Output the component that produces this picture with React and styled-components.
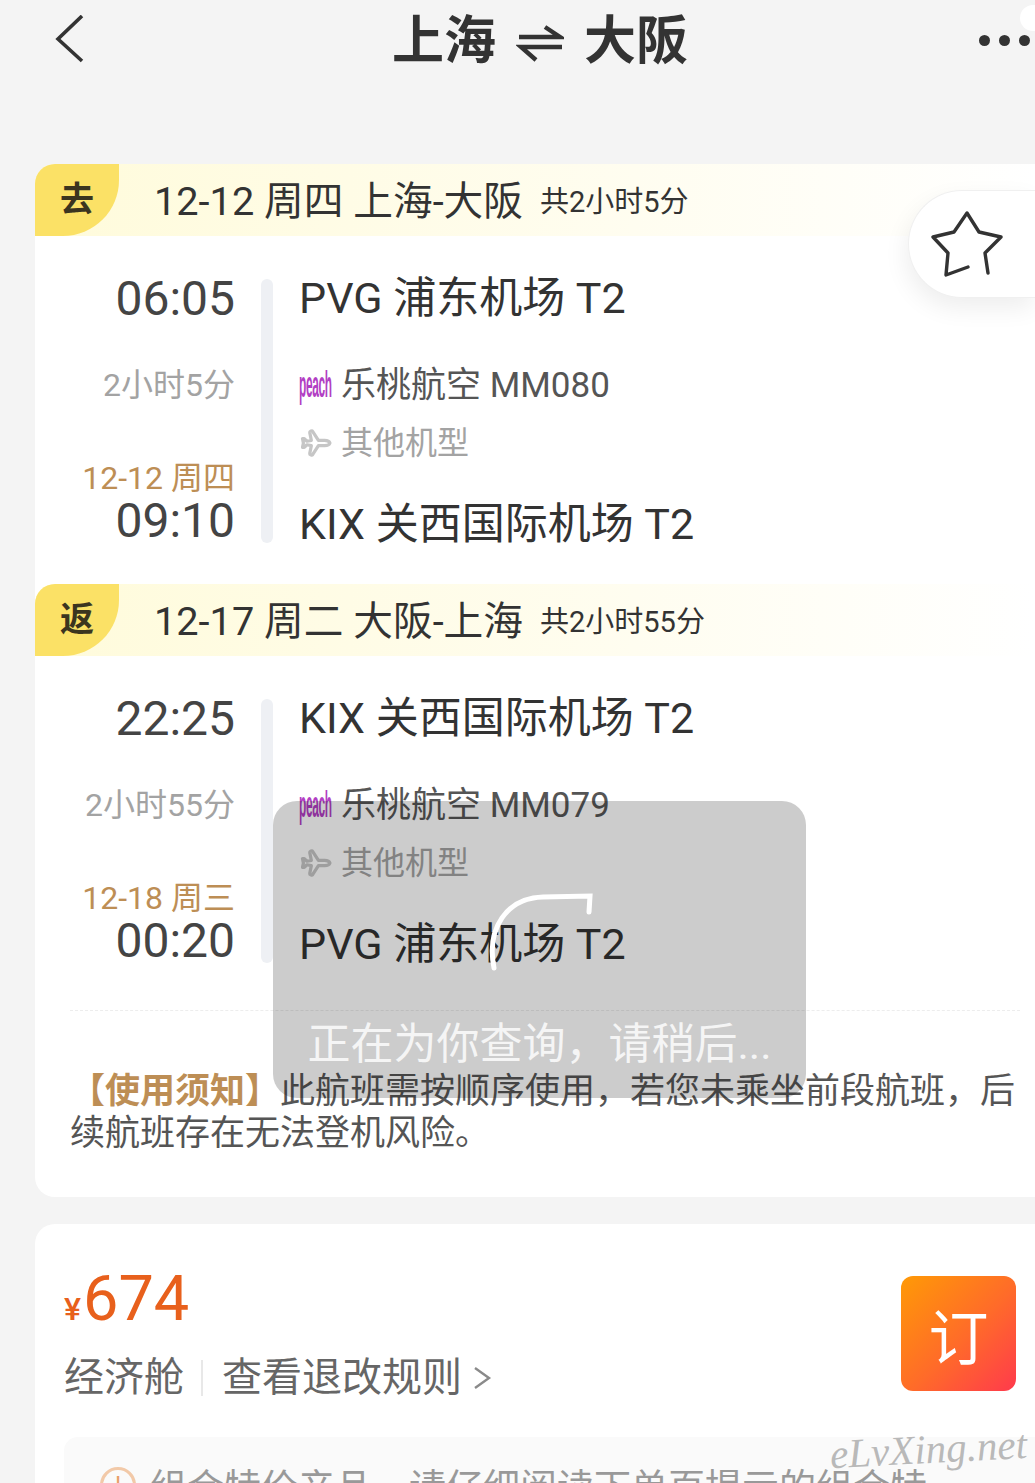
import React from "react"
import styled, { createGlobalStyle } from "styled-components"
import { Plane } from "lucide-react"

const legs = [
  {
    tag: "去",
    title: "12-12 周四 上海-大阪",
    total: "共2小时5分",
    depart: "06:05",
    from: "PVG 浦东机场 T2",
    duration: "2小时5分",
    flight: "乐桃航空 MM080",
    arriveDate: "12-12 周四",
    arrive: "09:10",
    to: "KIX 关西国际机场 T2",
  },
  {
    tag: "返",
    title: "12-17 周二 大阪-上海",
    total: "共2小时55分",
    depart: "22:25",
    from: "KIX 关西国际机场 T2",
    duration: "2小时55分",
    flight: "乐桃航空 MM079",
    arriveDate: "12-18 周三",
    arrive: "00:20",
    to: "PVG 浦东机场 T2",
  },
]

const App = () => {
  return (
    <>
      <GlobalStyle />
      <Page>
        <Nav>
          <BackIcon width="30" height="50" viewBox="0 0 30 50">
            <path d="M27 1 L3 24 L27 46" />
          </BackIcon>
          <Title>
            上海
            <svg width="48" height="40" viewBox="0 0 48 40" fill="none" stroke="#333" strokeWidth="4.4">
              <path d="M3 15 H44 L29 5" />
              <path d="M46 25 H5 L20 38" />
            </svg>
            大阪
          </Title>
          <Dots>
            <i />
            <i />
            <i />
          </Dots>
          <CornerBlob />
        </Nav>

        <FlightCard>
          {legs.map((leg) => (
            <section key={leg.tag}>
              <LegHeader>
                <LegTag>{leg.tag}</LegTag>
                <LegTitle>{leg.title}</LegTitle>
                <LegTotal>{leg.total}</LegTotal>
              </LegHeader>
              <LegBody>
                <TimeColumn>
                  <Time>{leg.depart}</Time>
                  <Duration>{leg.duration}</Duration>
                  <ArriveDate>{leg.arriveDate}</ArriveDate>
                  <Time $tight>{leg.arrive}</Time>
                </TimeColumn>
                <Bar />
                <InfoColumn>
                  <Airport>{leg.from}</Airport>
                  <Airline>
                    <PeachLogo>
                      <span>peach</span>
                    </PeachLogo>
                    {leg.flight}
                  </Airline>
                  <PlaneType>
                    <PlaneIcon size={30} strokeWidth={2.6} />
                    其他机型
                  </PlaneType>
                  <Airport $last>{leg.to}</Airport>
                </InfoColumn>
              </LegBody>
            </section>
          ))}
          <Notice>
            <strong>【使用须知】</strong>此航班需按顺序使用，若您未乘坐前段航班，后续航班存在无法登机风险。
          </Notice>
          <Favorite>
            <svg width="74" height="68" viewBox="0 0 74 68" fill="none" stroke="#333" strokeWidth="3.4" strokeLinejoin="round" strokeLinecap="round">
              <path d="M38 57 L16 65 L18 43 L3 27 L24 22 L37 3 L49 22 L71 27 L55 43 L58 63" />
            </svg>
          </Favorite>
        </FlightCard>

        <PriceCard>
          <PriceRow>
            <div>
              <Price>
                <small>¥</small>674
              </Price>
              <Fare>
                <span>经济舱</span>
                <FareLink>
                  查看退改规则
                  <svg width="20" height="30" viewBox="0 0 20 30" fill="none" stroke="#8a8a8a" strokeWidth="2.4">
                    <path d="M3 5 L17 15 L3 25" />
                  </svg>
                </FareLink>
              </Fare>
            </div>
            <BookButton>订</BookButton>
          </PriceRow>
          <TipBox>
            <TipIcon>!</TipIcon>
            组合特价产品，请仔细阅读下单页提示的组合特
          </TipBox>
        </PriceCard>

        <Loading>
          <svg width="112" height="84" viewBox="0 0 112 84" fill="none" stroke="#fff" strokeWidth="5" strokeLinecap="round">
            <path d="M7 78 C-1 38 20 8 56 7 L103 6 L102 22" />
          </svg>
          <LoadingText>正在为你查询，请稍后...</LoadingText>
        </Loading>

        <Watermark>eLvXing.net</Watermark>
      </Page>
    </>
  )
}

const GlobalStyle = createGlobalStyle`
  html, body {
    margin: 0;
    padding: 0;
    background: #f4f4f4;
  }

  * {
    box-sizing: border-box;
  }
`

const Page = styled.div`
  position: relative;
  width: 1035px;
  height: 1483px;
  overflow: hidden;
  background: #f4f4f4;
  color: #333;
  font-family: Roboto, "Noto Sans CJK SC", sans-serif;
`

const Nav = styled.header`
  position: relative;
  display: flex;
  align-items: center;
  justify-content: space-between;
  height: 80px;
  margin-bottom: 84px;
  padding: 0 5px 0 55px;
`

const BackIcon = styled.svg`
  fill: none;
  stroke: #333;
  stroke-width: 3.6;
`

const Title = styled.h1`
  display: flex;
  align-items: center;
  gap: 20px;
  margin: 4px 0 0 16px;
  font-size: 52px;
  font-weight: 700;
  line-height: 80px;
  color: #333;
`

const Dots = styled.div`
  display: flex;
  gap: 9px;

  i {
    width: 11px;
    height: 11px;
    border-radius: 50%;
    background: #333;
  }
`

const CornerBlob = styled.span`
  position: absolute;
  top: 5px;
  right: 0;
  width: 15px;
  height: 26px;
  background: #fff;
  border-radius: 13px 0 0 13px;
`

const FlightCard = styled.main`
  position: relative;
  height: 1033px;
  margin-left: 35px;
  background: #fff;
  border-radius: 20px 0 0 20px;
`

const LegHeader = styled.div`
  display: flex;
  align-items: center;
  height: 72px;
  background: linear-gradient(90deg, #fffbdb 0%, #fffdf0 60%, #fff 100%);
  border-radius: 20px 0 0 0;
`

const LegTag = styled.span`
  flex: none;
  width: 84px;
  height: 72px;
  margin-right: 35px;
  background: #fbe166;
  border-radius: 20px 0 56px 0;
  font-size: 34px;
  font-weight: 700;
  line-height: 70px;
  text-align: center;
  color: #3b351f;
`

const LegTitle = styled.span`
  margin-top: -6px;
  font-size: 39.7px;
  color: #333;
`

const LegTotal = styled.span`
  margin: -3px 0 0 17px;
  font-size: 29px;
  color: #333;
`

const LegBody = styled.div`
  display: flex;
  height: 348px;
  padding-top: 43px;
`

const TimeColumn = styled.div`
  width: 200px;
  text-align: right;
`

const Time = styled.div`
  margin-top: ${(p) => (p.$tight ? "8px" : "0")};
  font-size: 48px;
  line-height: 40px;
  color: #444;
`

const Duration = styled.div`
  margin-top: 49px;
  font-size: 32px;
  line-height: 34px;
  color: #a3a3a3;
`

const ArriveDate = styled.div`
  margin-top: 61px;
  font-size: 32px;
  line-height: 30px;
  color: #bd8e55;
`

const Bar = styled.div`
  flex: none;
  width: 12px;
  height: 264px;
  margin: 0 26px;
  background: #eef0f4;
  border-radius: 6px;
`

const InfoColumn = styled.div`
  flex: 1;
`

const Airport = styled.div`
  margin-top: ${(p) => (p.$last ? "44px" : "0")};
  font-size: 43px;
  line-height: 39px;
  color: #333;
`

const Airline = styled.div`
  display: flex;
  align-items: center;
  gap: 10px;
  margin-top: 50px;
  font-size: 35px;
  line-height: 36px;
  color: #555;
`

const PeachLogo = styled.span`
  display: inline-block;
  width: 32px;
  height: 36px;
  font-family: "Liberation Sans", sans-serif;
  font-size: 36px;
  font-weight: 700;
  line-height: 34px;
  color: #b23fc4;

  span {
    display: inline-block;
    letter-spacing: -1px;
    transform: scaleX(0.33);
    transform-origin: left center;
    white-space: nowrap;
  }
`

const PlaneType = styled.div`
  display: flex;
  align-items: center;
  gap: 12px;
  margin-top: 21px;
  font-size: 32px;
  line-height: 36px;
  color: #a3a3a3;
`

const PlaneIcon = styled(Plane)`
  color: #c6c6c6;
  transform: rotate(45deg);
`

const Notice = styled.p`
  position: relative;
  margin: 6px 15px 0 35px;
  padding-top: 60px;
  border-top: 1px dashed #ededed;
  font-size: 35px;
  line-height: 42px;
  color: #555;

  strong {
    font-weight: 700;
    color: #bd8e55;
  }
`

const Favorite = styled.div`
  position: absolute;
  top: 26px;
  right: 0;
  display: flex;
  align-items: center;
  width: 127px;
  height: 108px;
  padding-left: 21px;
  background: #fff;
  border: 1px solid #f0f0f0;
  border-right: 0;
  border-radius: 54px 0 0 54px;
  box-shadow: -2px 10px 24px rgba(0, 0, 0, 0.07);
`

const PriceCard = styled.section`
  height: 300px;
  margin: 27px 0 0 35px;
  padding: 40px 19px 0 29px;
  background: #fff;
  border-radius: 20px 0 0 0;
`

const PriceRow = styled.div`
  display: flex;
  align-items: flex-start;
  justify-content: space-between;
`

const Price = styled.div`
  font-size: 63px;
  line-height: 70px;
  color: #e8601c;

  small {
    margin-right: 2px;
    font-size: 32px;
    font-weight: 500;
  }
`

const Fare = styled.div`
  display: flex;
  align-items: center;
  margin-top: 8px;
  font-size: 40px;
  line-height: 52px;
  color: #666;
`

const FareLink = styled.span`
  display: flex;
  align-items: center;
  gap: 10px;
  height: 36px;
  margin-left: 17px;
  padding-left: 19px;
  border-left: 2px solid #e8e8e8;
`

const BookButton = styled.button`
  width: 115px;
  height: 115px;
  margin-top: 12px;
  padding: 0;
  border: 0;
  border-radius: 12px;
  background: linear-gradient(135deg, #ff9a06 0%, #ff6a2a 55%, #ff3a4c 100%);
  font-family: inherit;
  font-size: 60px;
  color: #fff;
`

const TipBox = styled.div`
  display: flex;
  align-items: center;
  gap: 14px;
  height: 100px;
  margin: 33px -19px 0 0;
  padding: 0 0 4px 36px;
  background: #fafafa;
  border-radius: 14px 0 0 14px;
  font-size: 37px;
  color: #999;
  white-space: nowrap;
`

const TipIcon = styled.span`
  flex: none;
  width: 36px;
  height: 36px;
  border: 3px solid #f2c9a8;
  border-radius: 50%;
  font-size: 24px;
  line-height: 30px;
  text-align: center;
  color: #e8a06a;
`

const Loading = styled.div`
  position: absolute;
  top: 801px;
  left: 273px;
  display: flex;
  flex-direction: column;
  align-items: center;
  width: 533px;
  height: 297px;
  padding: 89px 0 0 6px;
  background: rgba(0, 0, 0, 0.2);
  border-radius: 24px;
`

const LoadingText = styled.div`
  margin: 45px 0 0 -6px;
  font-size: 43px;
  line-height: 50px;
  color: rgba(255, 255, 255, 0.82);
`

const Watermark = styled.div`
  position: absolute;
  top: 1425px;
  left: 830px;
  font-family: "Liberation Serif", serif;
  font-size: 41px;
  font-style: italic;
  color: #b9b9b9;
  text-shadow: 0 0 2px #fff;
  transform: rotate(-3deg);
`

export default App
